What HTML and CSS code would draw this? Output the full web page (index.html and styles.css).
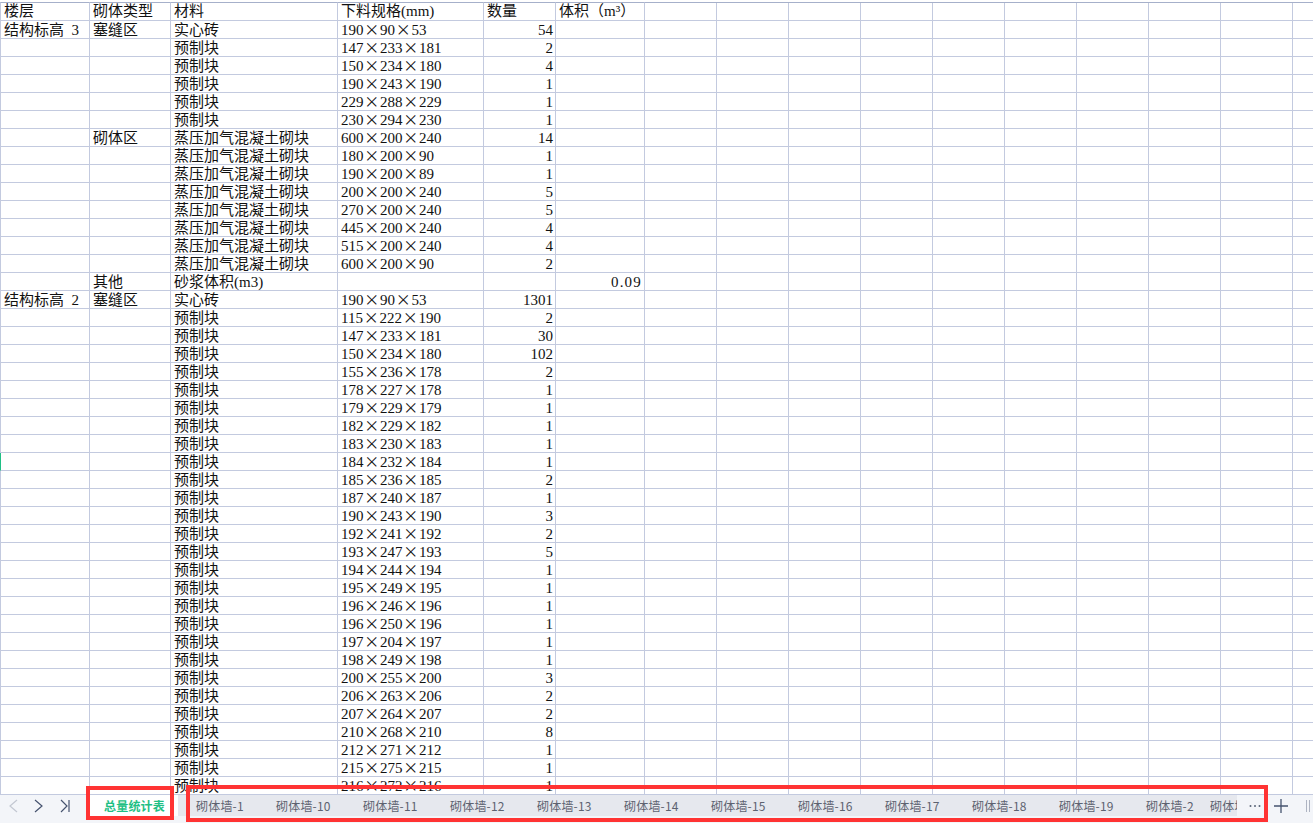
FILE: index.html
```html
<!DOCTYPE html>
<html lang="zh-CN">
<head>
<meta charset="utf-8">
<title>总量统计表</title>
<link rel="stylesheet" href="styles.css">
</head>
<body>
<div class="app">
<main class="sheet">
<table class="grid">
<tbody>
<tr class="head"><td>楼层</td><td>砌体类型</td><td>材料</td><td>下料规格(mm)</td><td>数量</td><td>体积（m³）</td><td class="rest"></td></tr>
<tr><td>结构标高 3</td><td>塞缝区</td><td>实心砖</td><td>190<i>×</i>90<i>×</i>53</td><td class="n">54</td><td></td><td class="rest"></td></tr>
<tr><td></td><td></td><td>预制块</td><td>147<i>×</i>233<i>×</i>181</td><td class="n">2</td><td></td><td class="rest"></td></tr>
<tr><td></td><td></td><td>预制块</td><td>150<i>×</i>234<i>×</i>180</td><td class="n">4</td><td></td><td class="rest"></td></tr>
<tr><td></td><td></td><td>预制块</td><td>190<i>×</i>243<i>×</i>190</td><td class="n">1</td><td></td><td class="rest"></td></tr>
<tr><td></td><td></td><td>预制块</td><td>229<i>×</i>288<i>×</i>229</td><td class="n">1</td><td></td><td class="rest"></td></tr>
<tr><td></td><td></td><td>预制块</td><td>230<i>×</i>294<i>×</i>230</td><td class="n">1</td><td></td><td class="rest"></td></tr>
<tr><td></td><td>砌体区</td><td>蒸压加气混凝土砌块</td><td>600<i>×</i>200<i>×</i>240</td><td class="n">14</td><td></td><td class="rest"></td></tr>
<tr><td></td><td></td><td>蒸压加气混凝土砌块</td><td>180<i>×</i>200<i>×</i>90</td><td class="n">1</td><td></td><td class="rest"></td></tr>
<tr><td></td><td></td><td>蒸压加气混凝土砌块</td><td>190<i>×</i>200<i>×</i>89</td><td class="n">1</td><td></td><td class="rest"></td></tr>
<tr><td></td><td></td><td>蒸压加气混凝土砌块</td><td>200<i>×</i>200<i>×</i>240</td><td class="n">5</td><td></td><td class="rest"></td></tr>
<tr><td></td><td></td><td>蒸压加气混凝土砌块</td><td>270<i>×</i>200<i>×</i>240</td><td class="n">5</td><td></td><td class="rest"></td></tr>
<tr><td></td><td></td><td>蒸压加气混凝土砌块</td><td>445<i>×</i>200<i>×</i>240</td><td class="n">4</td><td></td><td class="rest"></td></tr>
<tr><td></td><td></td><td>蒸压加气混凝土砌块</td><td>515<i>×</i>200<i>×</i>240</td><td class="n">4</td><td></td><td class="rest"></td></tr>
<tr><td></td><td></td><td>蒸压加气混凝土砌块</td><td>600<i>×</i>200<i>×</i>90</td><td class="n">2</td><td></td><td class="rest"></td></tr>
<tr><td></td><td>其他</td><td>砂浆体积(m3)</td><td></td><td></td><td class="n dec">0.09</td><td class="rest"></td></tr>
<tr><td>结构标高 2</td><td>塞缝区</td><td>实心砖</td><td>190<i>×</i>90<i>×</i>53</td><td class="n">1301</td><td></td><td class="rest"></td></tr>
<tr><td></td><td></td><td>预制块</td><td>115<i>×</i>222<i>×</i>190</td><td class="n">2</td><td></td><td class="rest"></td></tr>
<tr><td></td><td></td><td>预制块</td><td>147<i>×</i>233<i>×</i>181</td><td class="n">30</td><td></td><td class="rest"></td></tr>
<tr><td></td><td></td><td>预制块</td><td>150<i>×</i>234<i>×</i>180</td><td class="n">102</td><td></td><td class="rest"></td></tr>
<tr><td></td><td></td><td>预制块</td><td>155<i>×</i>236<i>×</i>178</td><td class="n">2</td><td></td><td class="rest"></td></tr>
<tr><td></td><td></td><td>预制块</td><td>178<i>×</i>227<i>×</i>178</td><td class="n">1</td><td></td><td class="rest"></td></tr>
<tr><td></td><td></td><td>预制块</td><td>179<i>×</i>229<i>×</i>179</td><td class="n">1</td><td></td><td class="rest"></td></tr>
<tr><td></td><td></td><td>预制块</td><td>182<i>×</i>229<i>×</i>182</td><td class="n">1</td><td></td><td class="rest"></td></tr>
<tr><td></td><td></td><td>预制块</td><td>183<i>×</i>230<i>×</i>183</td><td class="n">1</td><td></td><td class="rest"></td></tr>
<tr><td class="current"></td><td></td><td>预制块</td><td>184<i>×</i>232<i>×</i>184</td><td class="n">1</td><td></td><td class="rest"></td></tr>
<tr><td></td><td></td><td>预制块</td><td>185<i>×</i>236<i>×</i>185</td><td class="n">2</td><td></td><td class="rest"></td></tr>
<tr><td></td><td></td><td>预制块</td><td>187<i>×</i>240<i>×</i>187</td><td class="n">1</td><td></td><td class="rest"></td></tr>
<tr><td></td><td></td><td>预制块</td><td>190<i>×</i>243<i>×</i>190</td><td class="n">3</td><td></td><td class="rest"></td></tr>
<tr><td></td><td></td><td>预制块</td><td>192<i>×</i>241<i>×</i>192</td><td class="n">2</td><td></td><td class="rest"></td></tr>
<tr><td></td><td></td><td>预制块</td><td>193<i>×</i>247<i>×</i>193</td><td class="n">5</td><td></td><td class="rest"></td></tr>
<tr><td></td><td></td><td>预制块</td><td>194<i>×</i>244<i>×</i>194</td><td class="n">1</td><td></td><td class="rest"></td></tr>
<tr><td></td><td></td><td>预制块</td><td>195<i>×</i>249<i>×</i>195</td><td class="n">1</td><td></td><td class="rest"></td></tr>
<tr><td></td><td></td><td>预制块</td><td>196<i>×</i>246<i>×</i>196</td><td class="n">1</td><td></td><td class="rest"></td></tr>
<tr><td></td><td></td><td>预制块</td><td>196<i>×</i>250<i>×</i>196</td><td class="n">1</td><td></td><td class="rest"></td></tr>
<tr><td></td><td></td><td>预制块</td><td>197<i>×</i>204<i>×</i>197</td><td class="n">1</td><td></td><td class="rest"></td></tr>
<tr><td></td><td></td><td>预制块</td><td>198<i>×</i>249<i>×</i>198</td><td class="n">1</td><td></td><td class="rest"></td></tr>
<tr><td></td><td></td><td>预制块</td><td>200<i>×</i>255<i>×</i>200</td><td class="n">3</td><td></td><td class="rest"></td></tr>
<tr><td></td><td></td><td>预制块</td><td>206<i>×</i>263<i>×</i>206</td><td class="n">2</td><td></td><td class="rest"></td></tr>
<tr><td></td><td></td><td>预制块</td><td>207<i>×</i>264<i>×</i>207</td><td class="n">2</td><td></td><td class="rest"></td></tr>
<tr><td></td><td></td><td>预制块</td><td>210<i>×</i>268<i>×</i>210</td><td class="n">8</td><td></td><td class="rest"></td></tr>
<tr><td></td><td></td><td>预制块</td><td>212<i>×</i>271<i>×</i>212</td><td class="n">1</td><td></td><td class="rest"></td></tr>
<tr><td></td><td></td><td>预制块</td><td>215<i>×</i>275<i>×</i>215</td><td class="n">1</td><td></td><td class="rest"></td></tr>
<tr><td></td><td></td><td>预制块</td><td>216<i>×</i>272<i>×</i>216</td><td class="n">1</td><td></td><td class="rest"></td></tr>
</tbody>
</table>
</main>
<footer class="bar">
<nav class="nav">
<button class="nav-btn"><svg width="10" height="14" viewBox="0 0 10 14"><path class="off" d="M9 1 2 7l7 6"/></svg></button>
<button class="nav-btn"><svg width="10" height="14" viewBox="0 0 10 14"><path d="m1 1 7 6-7 6"/></svg></button>
<button class="nav-btn"><svg width="10" height="14" viewBox="0 0 10 14"><path d="m1 1 6 6-6 6M9 1v12"/></svg></button>
</nav>
<div class="tab-active">总量统计表</div>
<div class="tabs">
<span class="tab tab-first">砌体墙-1</span>
<span class="tab">砌体墙-10</span>
<span class="tab">砌体墙-11</span>
<span class="tab">砌体墙-12</span>
<span class="tab">砌体墙-13</span>
<span class="tab">砌体墙-14</span>
<span class="tab">砌体墙-15</span>
<span class="tab">砌体墙-16</span>
<span class="tab">砌体墙-17</span>
<span class="tab">砌体墙-18</span>
<span class="tab">砌体墙-19</span>
<span class="tab tab-tight">砌体墙-2</span>
<span class="tab tab-clip">砌体墙-20</span>
</div>
<div class="tools">
<svg class="more" width="12" height="4" viewBox="0 0 12 4"><circle cx="1.5" cy="2" r="1"/><circle cx="6" cy="2" r="1"/><circle cx="10.5" cy="2" r="1"/></svg>
<svg class="plus" width="14" height="14" viewBox="0 0 14 14"><path d="M7 0v14M0 7h14"/></svg>
<svg class="split" width="4" height="12" viewBox="0 0 4 12"><path d="M.5 0v12M3.5 0v12"/></svg>
</div>
</footer>
<div class="mark mark-a"></div>
<div class="mark mark-b"></div>
</div>
</body>
</html>
```

FILE: styles.css
```css
* { box-sizing: border-box; }
html, body { margin: 0; height: 100%; overflow: hidden; background: #fff; }
body { font-family: "Noto Sans CJK SC", "Liberation Sans", sans-serif; color: #111; }
.app { position: relative; display: flex; flex-direction: column; height: 823px; }
.sheet { flex: 1; min-height: 0; overflow: hidden; padding-top: 2px; }

.grid, .grid tbody { display: block; width: 1313px; }
.grid { font: 15px/16px "Liberation Serif", "Noto Sans CJK SC", serif; word-spacing: 3.75px; }
.grid tr { display: grid; grid-template-columns: 90px 81px 167px 146px 72px 89px 668px; height: 18px; }
.grid tr.head { height: 19px; }
.grid td {
  display: block; padding: 1px 0 0 3px; white-space: nowrap;
  border-right: 1px solid #c3cadf; border-bottom: 1px solid #c3cadf;
}
.grid td:first-child { border-left: 1px solid #c3cadf; }
.grid td.current { border-left-color: #1fbf85; }
.grid .head td { border-top: 1px solid #a6b0ca; padding-top: 0; }
.grid td.rest {
  padding: 0; border-right: 0;
  background: repeating-linear-gradient(to right, transparent 0 71px, #c3cadf 71px 72px);
}
.grid td.n { text-align: right; padding: 1px 2px 0 0; }
.grid td.dec { letter-spacing: 1.2px; }
.grid i { display: inline-block; width: 16.5px; text-align: center; font-style: normal; font-family: "Noto Sans CJK SC", sans-serif; line-height: 10px; }

.bar { display: flex; flex: none; height: 29px; background: #f3f5f9; border-top: 1px solid #c3cadf; align-items: flex-start; }
.nav { display: flex; width: 88px; height: 22px; align-items: center; padding-left: 8px; gap: 16px; }
.nav-btn { display: flex; padding: 0; border: 0; background: none; width: 10px; }
.nav-btn path { fill: none; stroke: #46536f; stroke-width: 1.2; }
.nav-btn path.off { stroke: #c3c8d2; }
.tab-active {
  width: 90px; height: 21px; padding-left: 3px; background: #fff; color: #1fbf85; font-size: 12px; font-weight: 700;
  line-height: 22px; text-align: center; letter-spacing: .2px;
}
.tabs {
  display: flex; width: 1059px; height: 21px; padding-left: 18px; overflow: hidden;
  background: #e6e8ee; color: #5d6270; font: 12px/22px "Noto Sans CJK SC", sans-serif; letter-spacing: .2px; white-space: nowrap;
}
.tab { flex: none; width: 87px; }
.tab-first { width: 80px; }
.tab-tight { width: 64px; }
.tab-clip { width: 27px; overflow: hidden; }
.tools { display: flex; flex: 1; height: 22px; align-items: center; padding-left: 12px; }
.more { fill: #5a6478; }
.plus { margin-left: 13px; fill: none; stroke: #46536f; stroke-width: 1.3; }
.split { margin-left: 18px; fill: none; stroke: #aeb4c2; stroke-width: 1; }

.mark { position: absolute; border: 4px solid #ff3333; pointer-events: none; }
.mark-a { left: 86px; top: 786px; width: 88px; height: 34px; }
.mark-b { left: 186px; top: 785px; width: 1082px; height: 37px; }
```
